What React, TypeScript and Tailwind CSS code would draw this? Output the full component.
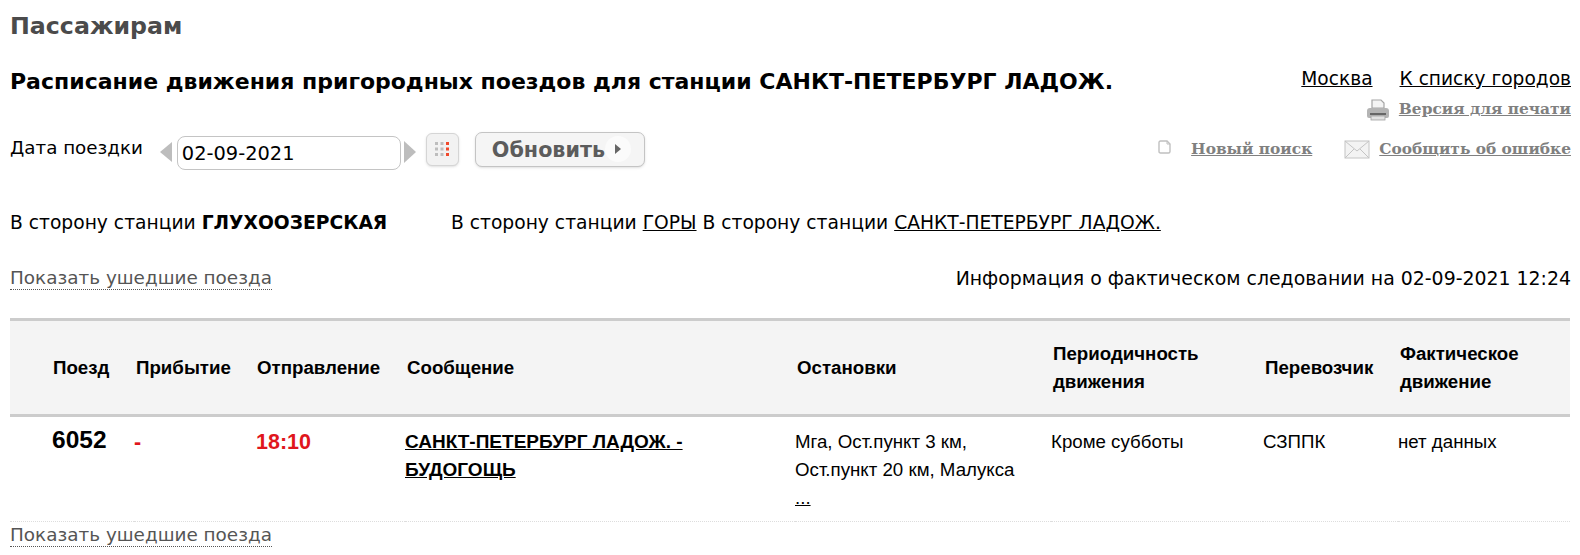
import React from 'react'

const verdana = "font-['DejaVu_Sans',Verdana,sans-serif]"
const serifBold = "font-['DejaVu_Serif',Georgia,serif] font-bold"

function PrinterIcon() {
  return (
    <svg width="26" height="24" viewBox="0 0 26 24" className="shrink-0">
      <path d="M7 10V2h9l3 3v5z" fill="#f4f4f4" stroke="#a5a5a5" strokeWidth="1.2" />
      <path d="M2 13q0-3 3-3h16q3 0 3 3v5q0 2-2 2H4q-2 0-2-2z" fill="#b4b4b4" />
      <rect x="5" y="15" width="16" height="2" fill="#666" />
      <rect x="6" y="18" width="14" height="4" fill="#e2e2e2" stroke="#a0a0a0" strokeWidth="0.8" />
    </svg>
  )
}

function MailIcon() {
  return (
    <svg width="26" height="19" viewBox="0 0 26 19" className="shrink-0">
      <rect x="1" y="1" width="24" height="17" fill="#f3f3f3" stroke="#c4c4c4" />
      <path d="M1 1l12 10L25 1M1 18l9-9M25 18l-9-9" fill="none" stroke="#c4c4c4" />
    </svg>
  )
}

function PageIcon() {
  return (
    <svg width="13" height="14" viewBox="0 0 13 14" className="shrink-0 mb-[6px] ml-[2px]">
      <path d="M2.5 1H9l3 3v7.5q0 1.500-1.500 1.500h-8Q1 13 1 11.500v-9Q1 1 2.500 1z" fill="#fff" stroke="#c0c0c0" strokeWidth="1.400" />
      <path d="M9 1v3h3" fill="none" stroke="#c0c0c0" />
    </svg>
  )
}

function CalendarDots() {
  const dots = [0, 1, 2].flatMap((row) => [0, 1, 2].map((col) => ({ row, col })))
  return (
    <svg width="14" height="14" viewBox="0 0 14 14">
      {dots.map(({ row, col }) => (
        <rect
          key={`${row}-${col}`}
          x={col * 5.500}
          y={row * 5.500}
          width="3"
          height="3"
          fill={col === 2 ? '#f0492c' : '#bdbdbd'}
        />
      ))}
    </svg>
  )
}

export default function App() {
  return (
    <div className={`w-[1580px] h-[555px] overflow-hidden bg-white text-black ${verdana}`}>
      <div className="pl-[10px] pr-[9px] pt-[12px]">
        <h1 className="text-[23.700px] leading-[28px] font-bold text-[#4b4b4b]">Пассажирам</h1>

        <div className="flex justify-between items-start mt-[25px]">
          <h2 className="text-[22px] leading-[30px] font-bold pt-[2px]">
            Расписание движения пригородных поездов для станции САНКТ-ПЕТЕРБУРГ ЛАДОЖ.
          </h2>
          <div className="flex flex-col items-end">
            <div className="flex gap-[27px] text-[18.600px] leading-[26px] mt-[1px]">
              <a className="underline">Москва</a>
              <a className="underline">К списку городов</a>
            </div>
            <div className="flex items-center gap-[8px] mt-[6px]">
              <PrinterIcon />
              <a className={`underline text-[15.400px] text-[#808080] ${serifBold}`}>Версия для печати</a>
            </div>
          </div>
        </div>

        <div className="flex justify-between items-center mt-[12px] h-[36px]">
          <div className="flex items-center">
            <span className="text-[18.300px] mr-[17px] relative top-[-4px]">Дата поездки</span>
            <span className="w-0 h-0 border-y-[10px] border-y-transparent border-r-[12px] border-r-[#bdbdbd] mr-[5px]" />
            <input
              readOnly
              value="02-09-2021"
              className="w-[224px] h-[34px] mt-[2px] px-[4px] pt-[1px] border border-[#c4c4c4] rounded-[8px] text-[19.400px] outline-none"
            />
            <span className="w-0 h-0 border-y-[11px] border-y-transparent border-l-[12px] border-l-[#bdbdbd] ml-[3px] mr-[10px]" />
            <span className="w-[33px] h-[33px] mb-[6px] flex items-center justify-center rounded-[6px] border border-[#d5d5d5] bg-[#f2f2f2] shadow-sm mr-[16px]">
              <CalendarDots />
            </span>
            <button className="w-[170px] h-[35px] mb-[6px] pt-[3px] flex items-center pl-[16px] rounded-[7px] border border-[#c4c4c4] bg-[#f5f5f5] shadow-sm text-[20.700px] font-bold text-[#5c5c5c]">
              Обновить
              <span className="w-[26px] h-[26px] mb-[4px] flex items-center justify-center rounded-full bg-[#fbfbfb]">
                <span className="w-0 h-0 border-y-[5px] border-y-transparent border-l-[6px] border-l-[#666]" />
              </span>
            </button>
          </div>
          <div className={`flex items-center mb-[4px] text-[15.400px] text-[#808080] ${serifBold}`}>
            <PageIcon />
            <a className="underline ml-[20px]">Новый поиск</a>
            <span className="ml-[32px] mr-[9px]"><MailIcon /></span>
            <a className="underline">Сообщить об ошибке</a>
          </div>
        </div>

        <div className="flex text-[18.700px] leading-[24px] mt-[41px]">
          <span className="w-[441px]">
            В сторону станции <b>ГЛУХООЗЕРСКАЯ</b>
          </span>
          <span>
            В сторону станции <a className="underline">ГОРЫ</a> В сторону станции{' '}
            <a className="underline">САНКТ-ПЕТЕРБУРГ ЛАДОЖ.</a>
          </span>
        </div>

        <div className="flex justify-between items-end mt-[31px] text-[18.900px] leading-[24px]">
          <a className="text-[#555] border-b border-dotted border-[#555] leading-[22px] text-[18.400px]">Показать ушедшие поезда</a>
          <span>Информация о фактическом следовании на 02-09-2021 12:24</span>
        </div>

        <table className="w-[1560px] table-fixed border-collapse mt-[28px] font-['Liberation_Sans',Arial,sans-serif]">
          <colgroup>
            <col className="w-[124px]" />
            <col className="w-[122px]" />
            <col className="w-[149px]" />
            <col className="w-[390px]" />
            <col className="w-[256px]" />
            <col className="w-[212px]" />
            <col className="w-[135px]" />
            <col className="w-[172px]" />
          </colgroup>
          <thead>
            <tr className="h-[96px] bg-[#f4f4f4] border-y-[3px] border-[#cccccc] text-[18.700px] leading-[28px] font-bold text-left">
              <th className="pl-[43px] font-bold">Поезд</th>
              <th className="pl-[2px] font-bold">Прибытие</th>
              <th className="pl-[1px] font-bold">Отправление</th>
              <th className="pl-[2px] font-bold">Сообщение</th>
              <th className="pl-[2px] font-bold">Остановки</th>
              <th className="pl-[2px] font-bold">Периодичность движения</th>
              <th className="pl-[2px] font-bold">Перевозчик</th>
              <th className="pl-[2px] font-bold">Фактическое движение</th>
            </tr>
          </thead>
          <tbody>
            <tr className="h-[106px] align-top border-b border-dotted border-[#dddddd] text-[18.700px] leading-[28px]">
              <td className="pl-[42px] pt-[9px] text-[24.500px] font-bold">6052</td>
              <td className="pt-[11px] text-[21.500px] font-bold text-[#e0161c]">-</td>
              <td className="pt-[11px] text-[21.500px] font-bold text-[#e0161c]">18:10</td>
              <td className="pt-[11px] pr-[90px] text-[19px] font-bold">
                <a className="underline">САНКТ-ПЕТЕРБУРГ ЛАДОЖ. - БУДОГОЩЬ</a>
              </td>
              <td className="pt-[11px] pr-[30px]">
                Мга, Ост.пункт 3 км, Ост.пункт 20 км, Малукса <a className="underline">...</a>
              </td>
              <td className="pt-[11px]">Кроме субботы</td>
              <td className="pt-[11px]">СЗППК</td>
              <td className="pt-[11px]">нет данных</td>
            </tr>
          </tbody>
        </table>

        <a className="inline-block text-[#555] border-b border-dotted border-[#555] text-[18.400px] leading-[22px] mt-[2px]">
          Показать ушедшие поезда
        </a>
      </div>
    </div>
  )
}
